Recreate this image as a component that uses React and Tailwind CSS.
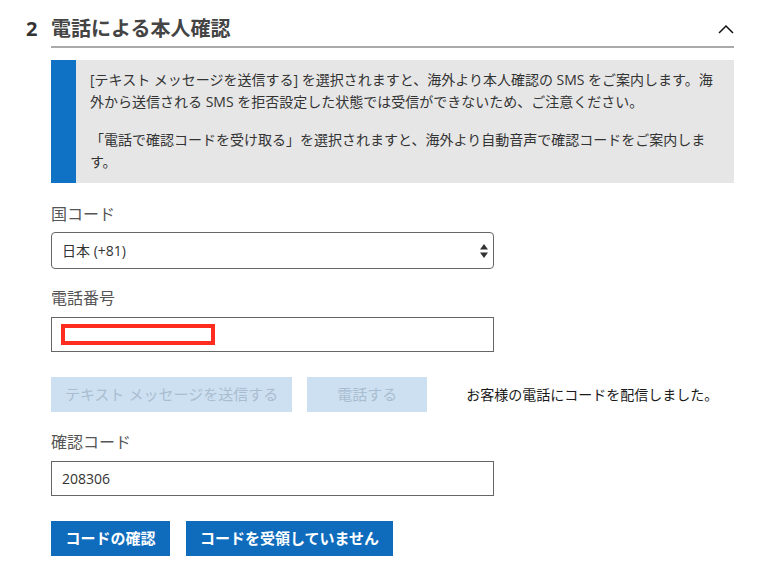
import React from 'react';

const FONT = { fontFamily: '"Open Sans", "Noto Sans CJK JP", sans-serif' };

function ChevronUp() {
  return (
    <svg width="16" height="10" viewBox="0 0 16 10" fill="none">
      <path d="M1 9 L8 2 L15 9" stroke="#111" strokeWidth="1.5" />
    </svg>
  );
}

function SelectArrows() {
  return (
    <svg width="8" height="14" viewBox="0 0 8 14">
      <path d="M4 0 L8 5.5 L0 5.5 Z" fill="#333" />
      <path d="M4 14 L8 8.5 L0 8.5 Z" fill="#333" />
    </svg>
  );
}

function FieldLabel({ children, className = '' }) {
  return <div className={`text-[16px] leading-[24px] text-[#555] ${className}`}>{children}</div>;
}

export default function App() {
  return (
    <div className="min-h-screen bg-white pl-[26px] pr-[39px] text-[#333]" style={FONT}>
      {/* Step header */}
      <div className="flex items-end">
        <span className="w-[25px] pb-[5px] text-[20px] leading-[28px] font-bold text-[#333]">2</span>
        <div className="flex flex-1 items-center justify-between border-b-2 border-[#aaa] pt-[15px] pb-[3px]">
          <h2 className="text-[20px] leading-[28px] font-bold text-[#444]">電話による本人確認</h2>
          <ChevronUp />
        </div>
      </div>

      <div className="ml-[25px]">
        {/* Notice */}
        <div className="mt-[12px] flex bg-[#e6e6e6]">
          <div className="w-[25px] shrink-0 bg-[#0f72c4]" />
          <div className="pl-[14px] pr-[12px] pt-[9px] pb-[10px] text-[14px] leading-[22px] text-[#333]">
            <p>
              [テキスト メッセージを送信する] を選択されますと、海外より本人確認の SMS をご案内します。海<br />
              外から送信される SMS を拒否設定した状態では受信ができないため、ご注意ください。
            </p>
            <p className="mt-[16px]">
              「電話で確認コードを受け取る」を選択されますと、海外より自動音声で確認コードをご案内しま<br />
              す。
            </p>
          </div>
        </div>

        {/* Country code */}
        <FieldLabel className="mt-[19px]">国コード</FieldLabel>
        <div className="mt-[6px] flex h-[37px] w-[443px] items-center justify-between rounded-[4px] border border-[#666] pl-[10px] pr-[5px] text-[14px] text-[#333]">
          <span>日本 (+81)</span>
          <SelectArrows />
        </div>

        {/* Phone number */}
        <FieldLabel className="mt-[17px]">電話番号</FieldLabel>
        <div className="mt-[7px] flex h-[35px] w-[443px] items-center border border-[#666] pl-[9px]">
          <div className="h-[21px] w-[154px] border-[4px] border-[#ff2d20] bg-white" />
        </div>

        {/* Send actions */}
        <div className="mt-[25px] flex items-center">
          <button className="h-[35px] bg-[#cde0f1] px-[14px] text-[15px] text-[#a9bdd0]" disabled>
            テキスト メッセージを送信する
          </button>
          <button className="ml-[15px] h-[35px] w-[120px] bg-[#cde0f1] text-[15px] text-[#a9bdd0]" disabled>
            電話する
          </button>
          <span className="ml-[39px] text-[14px] text-[#1a1a1a]">お客様の電話にコードを配信しました。</span>
        </div>

        {/* Verification code */}
        <FieldLabel className="mt-[18px]">確認コード</FieldLabel>
        <div className="mt-[7px] flex h-[35px] w-[443px] items-center border border-[#666] pl-[10px] text-[14px] text-[#333]">
          208306
        </div>

        <div className="mt-[25px] flex gap-[16px] pb-[13px]">
          <button className="h-[35px] w-[119px] bg-[#0f6cbd] text-[15px] font-bold text-white">コードの確認</button>
          <button className="h-[35px] bg-[#0f6cbd] px-[14px] text-[15px] font-bold text-white">コードを受領していません</button>
        </div>
      </div>
    </div>
  );
}
